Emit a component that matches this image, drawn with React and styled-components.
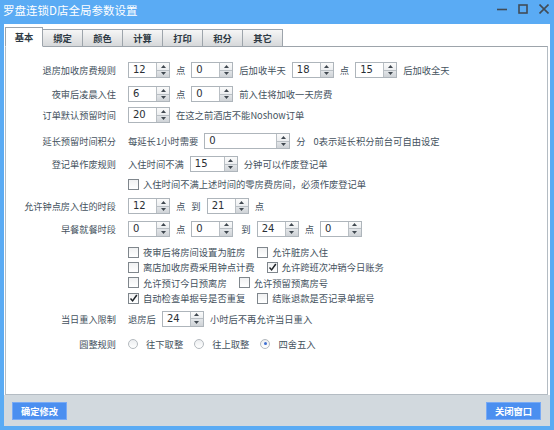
import React from 'react';
import styled, { createGlobalStyle } from 'styled-components';

// 全局参数设置窗口
const GlobalStyle = createGlobalStyle`
  html, body {
    margin: 0;
    padding: 0;
    background: #ffffff;
  }
  body {
    font-family: "Noto Sans CJK SC", "Noto Sans", sans-serif;
  }
`;

const tabs = ['基本', '绑定', '颜色', '计算', '打印', '积分', '其它'];

const Window = styled.div`
  width: 554px;
  height: 430px;
  box-sizing: border-box;
  padding: 0 4px 4px;
  background: #5aabf4;
  display: flex;
  flex-direction: column;
`;

const TitleBar = styled.div`
  height: 24px;
  display: flex;
  justify-content: space-between;
  align-items: flex-start;
`;

const Title = styled.div`
  color: #ffffff;
  font-size: 11.5px;
  line-height: 20px;
  margin-left: -1px;
`;

const Controls = styled.div`
  display: flex;
  gap: 11px;
  padding-top: 4px;
  margin-right: 1px;
`;

const Body = styled.div`
  flex: 1;
  background: #ffffff;
  display: flex;
  flex-direction: column;
`;

const TabStrip = styled.div`
  height: 22px;
  display: flex;
  align-items: flex-end;
  padding-left: 1px;
`;

const Tab = styled.div`
  position: relative;
  z-index: ${(p) => (p.$active ? 1 : 0)};
  box-sizing: border-box;
  width: ${(p) => (p.$active ? 38 : 40)}px;
  height: ${(p) => (p.$active ? 20 : 17)}px;
  margin-bottom: ${(p) => (p.$active ? -1 : 0)}px;
  border: 1px solid #9da4ab;
  border-bottom: ${(p) => (p.$active ? '1px solid #ffffff' : 'none')};
  border-left: ${(p) => (p.$first ? '1px solid #9da4ab' : 'none')};
  background: ${(p) =>
    p.$active ? '#ffffff' : 'linear-gradient(#f6f6f6, #d6d8da)'};
  display: flex;
  align-items: center;
  justify-content: center;
  font-size: 9.3px;
  font-weight: bold;
  color: #2e3a44;
`;

const Panel = styled.div`
  flex: 1;
  margin: 0 2px 0 1px;
  border: 1px solid #b4bcc3;
  border-top-color: #9da4ab;
  display: flex;
  flex-direction: column;
  padding-top: 14px;
`;

const Row = styled.div`
  display: flex;
  align-items: center;
  height: ${(p) => p.$h || 18}px;
  margin-top: ${(p) => p.$mt || 0}px;
`;

const Label = styled.div`
  width: 110px;
  margin-right: 12px;
  text-align: right;
  font-size: 9.2px;
  color: #44525e;
  white-space: nowrap;
`;

const Controls2 = styled.div`
  display: flex;
  align-items: center;
  gap: ${(p) => p.$gap ?? 6}px;
`;

const Text = styled.span`
  font-size: 9.3px;
  color: #44525e;
  white-space: nowrap;
  margin-left: ${(p) => p.$ml || 0}px;
`;

const SpinBox = styled.div`
  display: flex;
  box-sizing: border-box;
  width: ${(p) => p.$w || 42}px;
  height: 16px;
  border: 1px solid #aeb5bb;
  background: #ffffff;
`;

const SpinValue = styled.div`
  flex: 1;
  padding-left: 4px;
  font-size: 10px;
  line-height: 14px;
  color: #2a2f35;
  font-family: "DejaVu Sans", "Noto Sans", sans-serif;
`;

const SpinButtons = styled.div`
  width: 12px;
  display: flex;
  flex-direction: column;
  border-left: 1px solid #b9bfc4;
`;

const SpinHalf = styled.div`
  flex: 1;
  display: flex;
  align-items: center;
  justify-content: center;
  background: ${(p) => (p.$down ? 'linear-gradient(#e2e5e8, #cfd3d7)' : 'linear-gradient(#fbfbfb, #eceef0)')};
  border-top: ${(p) => (p.$down ? '1px solid #b9bfc4' : 'none')};
`;

const CheckRow = styled.div`
  display: flex;
  align-items: center;
  gap: 12px;
  height: ${(p) => p.$h || 15}px;
  margin-top: ${(p) => p.$mt || 0}px;
  padding-left: ${(p) => (p.$indent ? 122 : 0)}px;
`;

const Option = styled.label`
  display: flex;
  align-items: center;
  gap: ${(p) => p.$gap ?? 4}px;
  font-size: 9.3px;
  color: #44525e;
  white-space: nowrap;
`;

const Box = styled.span`
  box-sizing: border-box;
  width: 11px;
  height: 11px;
  border: 1px solid #7f868c;
  background: linear-gradient(#f0f1f2, #ffffff);
  display: flex;
  align-items: center;
  justify-content: center;
`;

const Radio = styled.span`
  box-sizing: border-box;
  width: 10px;
  height: 10px;
  border-radius: 50%;
  border: 1px solid #b3b9be;
  background: linear-gradient(#eceef0, #ffffff);
  display: flex;
  align-items: center;
  justify-content: center;

  &::after {
    content: '';
    width: 3px;
    height: 3px;
    border-radius: 50%;
    background: ${(p) => (p.$on ? '#3f6fd1' : 'transparent')};
  }
`;

const Footer = styled.div`
  height: 31px;
  background: #d2d9de;
  display: flex;
  align-items: center;
  justify-content: space-between;
  padding: 0 9px 0 8px;
`;

const Button = styled.button`
  width: 55px;
  height: 18px;
  padding: 0;
  border: 1px solid #78aaf5;
  background: #4b8ff0;
  color: #ffffff;
  font-family: "Noto Sans CJK SC", sans-serif;
  font-size: 9.3px;
  font-weight: bold;
`;

function Spinner({ value, w }) {
  return (
    <SpinBox $w={w}>
      <SpinValue>{value}</SpinValue>
      <SpinButtons>
        <SpinHalf>
          <svg width="5" height="3" viewBox="0 0 5 3">
            <path d="M0 3 L2.5 0 L5 3 Z" fill="#404850" />
          </svg>
        </SpinHalf>
        <SpinHalf $down>
          <svg width="5" height="3" viewBox="0 0 5 3">
            <path d="M0 0 L5 0 L2.5 3 Z" fill="#404850" />
          </svg>
        </SpinHalf>
      </SpinButtons>
    </SpinBox>
  );
}

function Check({ on, children }) {
  return (
    <Option>
      <Box>
        {on && (
          <svg width="9" height="9" viewBox="0 0 9 9">
            <path d="M1.5 4.6 L3.6 6.9 L7.8 1" fill="none" stroke="#1e2328" strokeWidth="1.5" />
          </svg>
        )}
      </Box>
      {children}
    </Option>
  );
}

function RadioOption({ on, children }) {
  return (
    <Option $gap={8}>
      <Radio $on={on} />
      {children}
    </Option>
  );
}

function WindowControls() {
  return (
    <Controls>
      <svg width="10" height="10" viewBox="0 0 10 10">
        <path d="M0 5.5 H10" stroke="#414c57" strokeWidth="1.6" />
      </svg>
      <svg width="10" height="10" viewBox="0 0 10 10">
        <rect x="1" y="1" width="8" height="8" fill="none" stroke="#414c57" strokeWidth="1.6" />
      </svg>
      <svg width="10" height="10" viewBox="0 0 10 10">
        <path d="M0.5 0.5 L9.5 9.5 M9.5 0.5 L0.5 9.5" stroke="#414c57" strokeWidth="1.6" />
      </svg>
    </Controls>
  );
}

export default function App() {
  return (
    <>
      <GlobalStyle />
      <Window>
        <TitleBar>
          <Title>罗盘连锁D店全局参数设置</Title>
          <WindowControls />
        </TitleBar>
        <Body>
          <TabStrip>
            {tabs.map((t, i) => (
              <Tab key={t} $active={i === 0} $first={i === 0}>
                {t}
              </Tab>
            ))}
          </TabStrip>
          <Panel>
            <Row>
              <Label>退房加收房费规则</Label>
              <Controls2>
                <Spinner value="12" />
                <Text>点</Text>
                <Spinner value="0" />
                <Text>后加收半天</Text>
                <Spinner value="18" />
                <Text>点</Text>
                <Spinner value="15" />
                <Text>后加收全天</Text>
              </Controls2>
            </Row>
            <Row $mt={6}>
              <Label>夜审后凌晨入住</Label>
              <Controls2>
                <Spinner value="6" />
                <Text>点</Text>
                <Spinner value="0" />
                <Text>前入住将加收一天房费</Text>
              </Controls2>
            </Row>
            <Row $mt={3}>
              <Label>订单默认预留时间</Label>
              <Controls2>
                <Spinner value="20" />
                <Text>在这之前酒店不能Noshow订单</Text>
              </Controls2>
            </Row>
            <Row $mt={8}>
              <Label>延长预留时间积分</Label>
              <Controls2>
                <Text>每延长1小时需要</Text>
                <Spinner value="0" w={86} />
                <Text>分</Text>
                <Text $ml={2}>0表示延长积分前台可自由设定</Text>
              </Controls2>
            </Row>
            <Row $mt={5}>
              <Label>登记单作废规则</Label>
              <Controls2>
                <Text>入住时间不满</Text>
                <Spinner value="15" w={48} />
                <Text>分钟可以作废登记单</Text>
              </Controls2>
            </Row>
            <CheckRow $indent $mt={3.5}>
              <Check>入住时间不满上述时间的零房费房间，必须作废登记单</Check>
            </CheckRow>
            <Row $mt={5.5}>
              <Label>允许钟点房入住的时段</Label>
              <Controls2>
                <Spinner value="12" />
                <Text>点</Text>
                <Text>到</Text>
                <Spinner value="21" />
                <Text>点</Text>
              </Controls2>
            </Row>
            <Row $mt={4.5}>
              <Label>早餐就餐时段</Label>
              <Controls2>
                <Spinner value="0" />
                <Text>点</Text>
                <Spinner value="0" />
                <Text $ml={2}>到</Text>
                <Spinner value="24" />
                <Text>点</Text>
                <Spinner value="0" />
              </Controls2>
            </Row>
            <CheckRow $indent $mt={7}>
              <Check>夜审后将房间设置为脏房</Check>
              <Check>允许脏房入住</Check>
            </CheckRow>
            <CheckRow $indent>
              <Check>离店加收房费采用钟点计费</Check>
              <Check on>允许跨班次冲销今日账务</Check>
            </CheckRow>
            <CheckRow $indent $mt={0.5}>
              <Check>允许预订今日预离房</Check>
              <Check>允许预留预离房号</Check>
            </CheckRow>
            <CheckRow $indent $mt={0.5}>
              <Check on>自动检查单据号是否重复</Check>
              <Check>结账退款是否记录单据号</Check>
            </CheckRow>
            <Row $mt={4}>
              <Label>当日重入限制</Label>
              <Controls2>
                <Text>退房后</Text>
                <Spinner value="24" />
                <Text>小时后不再允许当日重入</Text>
              </Controls2>
            </Row>
            <Row $mt={7}>
              <Label>圆整规则</Label>
              <Controls2 $gap={11}>
                <RadioOption>往下取整</RadioOption>
                <RadioOption>往上取整</RadioOption>
                <RadioOption on>四舍五入</RadioOption>
              </Controls2>
            </Row>
          </Panel>
          <Footer>
            <Button>确定修改</Button>
            <Button>关闭窗口</Button>
          </Footer>
        </Body>
      </Window>
    </>
  );
}
